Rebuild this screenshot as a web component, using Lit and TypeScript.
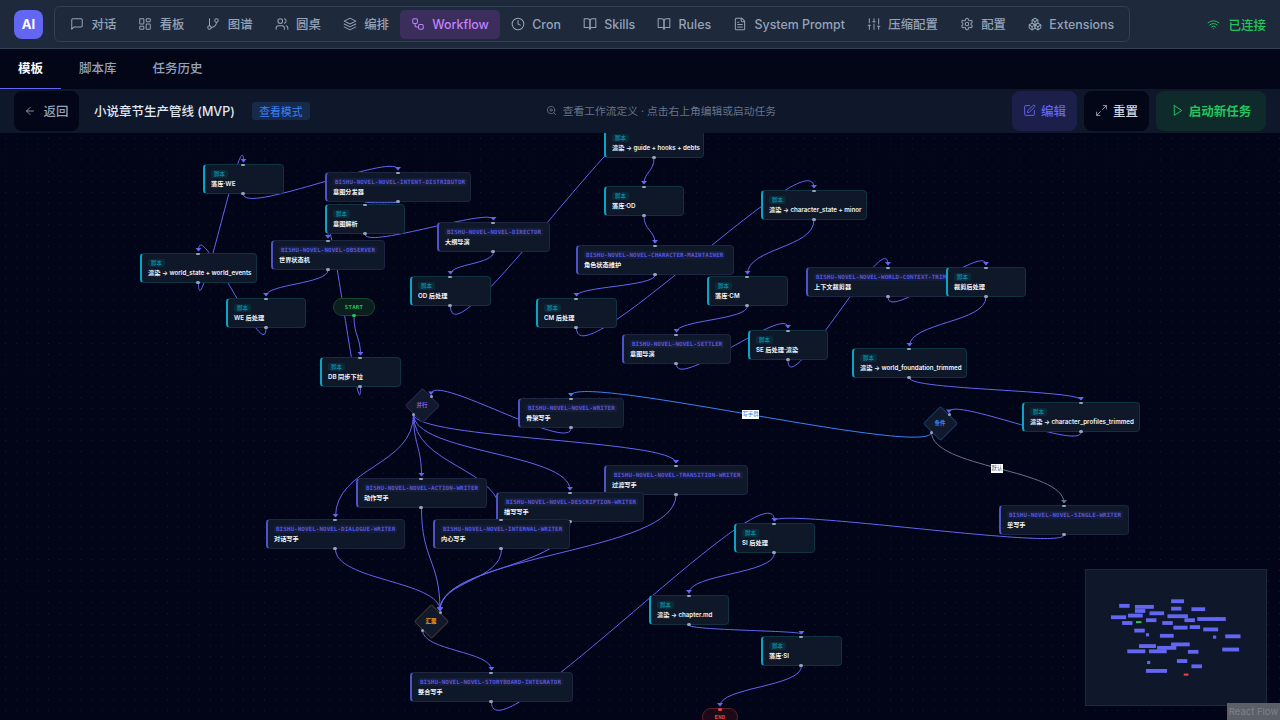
import { LitElement, html, css, svg } from "lit";
import { customElement } from "lit/decorators.js";

const I: Record<string, ReturnType<typeof svg>> = {
  chat: svg`<path d="M21 15a2 2 0 0 1-2 2H7l-4 4V5a2 2 0 0 1 2-2h14a2 2 0 0 1 2 2z"/>`,
  grid: svg`<rect x="3" y="3" width="7" height="9" rx="1"/><rect x="14" y="3" width="7" height="5" rx="1"/><rect x="14" y="12" width="7" height="9" rx="1"/><rect x="3" y="16" width="7" height="5" rx="1"/>`,
  branch: svg`<line x1="6" y1="3" x2="6" y2="15"/><circle cx="18" cy="6" r="3"/><circle cx="6" cy="18" r="3"/><path d="M18 9a9 9 0 0 1-9 9"/>`,
  users: svg`<path d="M16 21v-2a4 4 0 0 0-4-4H6a4 4 0 0 0-4 4v2"/><circle cx="9" cy="7" r="4"/><path d="M22 21v-2a4 4 0 0 0-3-3.87"/><path d="M16 3.13a4 4 0 0 1 0 7.75"/>`,
  layers: svg`<path d="M12 2 2 7l10 5 10-5-10-5Z"/><path d="m2 17 10 5 10-5"/><path d="m2 12 10 5 10-5"/>`,
  workflow: svg`<rect x="3" y="3" width="8" height="8" rx="2"/><path d="M7 11v4a2 2 0 0 0 2 2h4"/><rect x="13" y="13" width="8" height="8" rx="2"/>`,
  clock: svg`<circle cx="12" cy="12" r="10"/><polyline points="12 6 12 12 16 14"/>`,
  book: svg`<path d="M2 3h6a4 4 0 0 1 4 4v14a3 3 0 0 0-3-3H2z"/><path d="M22 3h-6a4 4 0 0 0-4 4v14a3 3 0 0 1 3-3h7z"/>`,
  file: svg`<path d="M15 2H6a2 2 0 0 0-2 2v16a2 2 0 0 0 2 2h12a2 2 0 0 0 2-2V7Z"/><path d="M14 2v4a2 2 0 0 0 2 2h4"/><path d="M10 9H8"/><path d="M16 13H8"/><path d="M16 17H8"/>`,
  sliders: svg`<line x1="4" y1="21" x2="4" y2="14"/><line x1="4" y1="10" x2="4" y2="3"/><line x1="12" y1="21" x2="12" y2="12"/><line x1="12" y1="8" x2="12" y2="3"/><line x1="20" y1="21" x2="20" y2="16"/><line x1="20" y1="12" x2="20" y2="3"/><line x1="2" y1="14" x2="6" y2="14"/><line x1="10" y1="8" x2="14" y2="8"/><line x1="18" y1="16" x2="22" y2="16"/>`,
  gear: svg`<path d="M12.22 2h-.44a2 2 0 0 0-2 2v.18a2 2 0 0 1-1 1.73l-.43.25a2 2 0 0 1-2 0l-.15-.08a2 2 0 0 0-2.73.73l-.22.38a2 2 0 0 0 .73 2.73l.15.1a2 2 0 0 1 1 1.72v.51a2 2 0 0 1-1 1.74l-.15.09a2 2 0 0 0-.73 2.73l.22.38a2 2 0 0 0 2.73.73l.15-.08a2 2 0 0 1 2 0l.43.25a2 2 0 0 1 1 1.73V20a2 2 0 0 0 2 2h.44a2 2 0 0 0 2-2v-.18a2 2 0 0 1 1-1.73l.43-.25a2 2 0 0 1 2 0l.15.08a2 2 0 0 0 2.73-.73l.22-.39a2 2 0 0 0-.73-2.73l-.15-.08a2 2 0 0 1-1-1.74v-.5a2 2 0 0 1 1-1.74l.15-.09a2 2 0 0 0 .73-2.73l-.22-.38a2 2 0 0 0-2.73-.73l-.15.08a2 2 0 0 1-2 0l-.43-.25a2 2 0 0 1-1-1.73V4a2 2 0 0 0-2-2z"/><circle cx="12" cy="12" r="3"/>`,
  boxes: svg`<path d="M2.97 12.92A2 2 0 0 0 2 14.63v3.24a2 2 0 0 0 .97 1.71l3 1.8a2 2 0 0 0 2.06 0L12 19v-5.5l-5-3-4.03 2.42Z"/><path d="m7 16.5-4.74-2.85"/><path d="m7 16.5 5-3"/><path d="M7 16.5v5.17"/><path d="M12 13.5V19l3.97 2.38a2 2 0 0 0 2.06 0l3-1.8a2 2 0 0 0 .97-1.71v-3.24a2 2 0 0 0-.97-1.71L17 10.5l-5 3Z"/><path d="m17 16.5-5-3"/><path d="m17 16.5 4.74-2.85"/><path d="M17 16.5v5.17"/><path d="M7.97 4.42A2 2 0 0 0 7 6.13v4.37l5 3 5-3V6.13a2 2 0 0 0-.97-1.71l-3-1.8a2 2 0 0 0-2.06 0l-3 1.8Z"/><path d="M12 8 7.26 5.15"/><path d="m12 8 4.74-2.85"/><path d="M12 13.5V8"/>`,
  wifi: svg`<path d="M12 20h.01"/><path d="M2 8.82a15 15 0 0 1 20 0"/><path d="M5 12.859a10 10 0 0 1 14 0"/><path d="M8.5 16.429a5 5 0 0 1 7 0"/>`,
  back: svg`<path d="m12 19-7-7 7-7"/><path d="M19 12H5"/>`,
  search: svg`<circle cx="11" cy="11" r="8"/><path d="m21 21-4.3-4.3"/><circle cx="11" cy="11" r="2.5"/>`,
  pen: svg`<path d="M12 3H5a2 2 0 0 0-2 2v14a2 2 0 0 0 2 2h14a2 2 0 0 0 2-2v-7"/><path d="M18.375 2.625a1 1 0 0 1 3 3l-9.013 9.014a2 2 0 0 1-.853.505l-2.873.84a.5.5 0 0 1-.62-.62l.84-2.873a2 2 0 0 1 .506-.852z"/>`,
  expand: svg`<path d="M15 3h6v6"/><path d="m21 3-7 7"/><path d="m3 21 7-7"/><path d="M9 21H3v-6"/>`,
  play: svg`<polygon points="6 3 20 12 6 21 6 3"/>`,
};

const icon = (n: string, size = 14) =>
  html`<svg class="ic" width=${size} height=${size} viewBox="0 0 24 24">${I[n]}</svg>`;

type Kind = "script" | "agent" | "start" | "end" | "par" | "cond" | "join";
interface N { id: string; k: Kind; x: number; y: number; w: number; h?: number; title?: string; label: string; }

const P = "BISHU-NOVEL-NOVEL-";
const S = (id: string, x: number, y: number, w: number, label: string): N => ({ id, k: "script", x, y, w, label, title: "脚本" });
const A = (id: string, x: number, y: number, w: number, t: string, label: string): N => ({ id, k: "agent", x, y, w, label, title: P + t });
const D = (id: string, k: Kind, cx: number, cy: number, label: string): N => ({ id, k, x: cx, y: cy, w: 0, label });

const nodes: N[] = [
  S("we", 203, 164, 81, "落库·WE"),
  A("intent", 325, 172, 146, "INTENT-DISTRIBUTOR", "意图分发器"),
  S("parse", 325, 204, 80, "意图解析"),
  A("obs", 271, 240, 114, "OBSERVER", "世界状态机"),
  S("rworld", 140, 253, 117, "渲染 → world_state + world_events"),
  S("wepost", 226, 298, 80, "WE 后处理"),
  { id: "start", k: "start", x: 333, y: 298, w: 42, h: 18, label: "START" },
  S("db", 320, 357, 81, "DB 同步下拉"),
  A("dir", 437, 222, 113, "DIRECTOR", "大纲导演"),
  S("odpost", 410, 276, 81, "OD 后处理"),
  S("guide", 604, 128, 100, "渲染 → guide + hooks + debts"),
  S("od", 604, 186, 80, "落库·OD"),
  A("char", 576, 245, 158, "CHARACTER-MAINTAINER", "角色状态维护"),
  S("cmpost", 536, 298, 81, "CM 后处理"),
  S("rchar", 761, 190, 106, "渲染 → character_state + minor"),
  S("cm", 707, 276, 81, "落库·CM"),
  A("settler", 622, 334, 109, "SETTLER", "意图导演"),
  S("sepost", 748, 330, 80, "SE 后处理·渲染"),
  A("ctx", 806, 267, 164, "WORLD-CONTEXT-TRIMMER", "上下文裁剪器"),
  S("trimpost", 946, 267, 80, "裁剪后处理"),
  S("rfound", 852, 348, 115, "渲染 → world_foundation_trimmed"),
  S("rprof", 1022, 402, 118, "渲染 → character_profiles_trimmed"),
  D("par", "par", 422, 405, "并行"),
  D("cond", "cond", 940, 423, "条件"),
  A("writer", 518, 398, 106, "WRITER", "骨架写手"),
  A("trans", 604, 465, 144, "TRANSITION-WRITER", "过渡写手"),
  A("action", 356, 478, 131, "ACTION-WRITER", "动作写手"),
  A("desc", 496, 492, 148, "DESCRIPTION-WRITER", "描写写手"),
  A("dial", 266, 519, 139, "DIALOGUE-WRITER", "对话写手"),
  A("inner", 433, 519, 137, "INTERNAL-WRITER", "内心写手"),
  A("single", 999, 505, 130, "SINGLE-WRITER", "单写手"),
  S("sipost", 734, 523, 81, "SI 后处理"),
  S("chapter", 649, 595, 80, "渲染 → chapter.md"),
  S("si", 761, 636, 81, "落库·SI"),
  D("join", "join", 431, 621, "汇聚"),
  A("integ", 410, 672, 163, "STORYBOARD-INTEGRATOR", "整合写手"),
  { id: "end", k: "end", x: 702, y: 708, w: 36, h: 18, label: "END" },
];

const byId = new Map(nodes.map((n) => [n.id, n]));
const isDiamond = (n: N) => n.k === "par" || n.k === "cond" || n.k === "join";
const height = (n: N) => n.h ?? 30;
const outOf = (n: N) => (isDiamond(n) ? [n.x - 8.5, n.y + 9] : [n.x + n.w / 2, n.y + height(n)]);
const into = (n: N) => (isDiamond(n) ? [n.x + 9, n.y - 8.5] : [n.x + n.w / 2, n.y]);

const IND = "#6366f1";
const edges: [string, string, string?][] = [
  ["start", "db"], ["db", "obs"], ["obs", "wepost"], ["wepost", "rworld"], ["rworld", "we"], ["we", "intent"],
  ["intent", "parse"], ["parse", "dir"], ["dir", "odpost"], ["odpost", "guide"], ["guide", "od"], ["od", "char"],
  ["char", "cmpost"], ["cmpost", "rchar"], ["rchar", "cm"], ["cm", "settler"], ["settler", "sepost"], ["sepost", "ctx"],
  ["ctx", "trimpost"], ["trimpost", "rfound"], ["rfound", "rprof"], ["rprof", "cond"],
  ["cond", "writer", "#3b82f6"], ["cond", "single", "#64748b"], ["writer", "par"],
  ["par", "action"], ["par", "dial"], ["par", "desc"], ["par", "trans"], ["par", "inner"],
  ["action", "join"], ["dial", "join"], ["desc", "join"], ["trans", "join"], ["inner", "join"],
  ["join", "integ"], ["integ", "sipost"], ["single", "sipost"], ["sipost", "chapter"], ["chapter", "si"], ["si", "end"],
];

const edgePath = (a: number[], b: number[]) => {
  const d = b[1] - a[1];
  const off = d >= 0 ? 0.5 * d : 6.25 * Math.sqrt(-d * 0.54);
  return `M${a[0]},${a[1]} C${a[0]},${a[1] + off} ${b[0]},${b[1] - off} ${b[0]},${b[1] - 2}`;
};

const NAV: [string, string][] = [
  ["chat", "对话"], ["grid", "看板"], ["branch", "图谱"], ["users", "圆桌"], ["layers", "编排"], ["workflow", "Workflow"],
  ["clock", "Cron"], ["book", "Skills"], ["book", "Rules"], ["file", "System Prompt"], ["sliders", "压缩配置"], ["gear", "配置"], ["boxes", "Extensions"],
];

const miniX = (x: number) => 1110 + 0.1315 * (x - 140);
const miniY = (y: number) => 615 + 0.13 * (y - 253);

@customElement("app-root")
export class AppRoot extends LitElement {
  static styles = css`
    :host { display: block; width: 1280px; height: 720px; overflow: hidden; background: #020617;
      font-family: Inter, "Noto Sans CJK SC", sans-serif; color: #e2e8f0; }
    .page { display: flex; flex-direction: column; height: 720px; }
    .ic { fill: none; stroke: currentColor; stroke-width: 1.75; stroke-linecap: round; stroke-linejoin: round; flex: none; }
    .top { height: 49px; box-sizing: border-box; flex: none; background: #1e293b; border-bottom: 1px solid #334155; display: flex; align-items: center; padding: 0 14px; }
    .logo { width: 29px; height: 29px; border-radius: 8px; background: #6366f1; color: #fff; font-size: 13px; font-weight: 700; display: flex; align-items: center; justify-content: center; flex: none; }
    .nav { margin-left: 11px; width: 1076px; height: 36px; box-sizing: border-box; border: 1px solid #334155; border-radius: 6px; display: flex; align-items: center; padding: 0 2px 0 4.1px; gap: 0; }
    .item { height: 29px; display: flex; align-items: center; gap: 7.5px; padding: 0 10.95px; color: #94a3b8; font-size: 12.4px; font-weight: 500; border-radius: 5px; white-space: nowrap; }
    .item.on { background: #3b2d5c; color: #c084fc; }
    .conn { margin-left: auto; display: flex; align-items: center; gap: 8px; color: #22c55e; font-size: 12.5px; font-weight: 500; }
    .tabs { height: 40px; flex: none; box-sizing: border-box; background: #020617; display: flex; }
    .tab { padding: 0 18px 2px; display: flex; align-items: center; font-size: 12.5px; font-weight: 500; color: #94a3b8; box-sizing: border-box; border-bottom: 1px solid transparent; }
    .tab.on { color: #f8fafc; font-weight: 700; border-bottom-color: #6366f1; }
    .bar { height: 44px; flex: none; box-sizing: border-box; background: #0f172a; display: flex; align-items: center; padding: 0 14px; }
    .btn { height: 40px; border-radius: 8px; display: flex; align-items: center; justify-content: center; gap: 5px; font-size: 12.5px; font-weight: 500; box-sizing: border-box; flex: none; white-space: nowrap; padding-bottom: 1px; }
    .back { width: 65px; gap: 7px; background: #020617; color: #94a3b8; }
    .ttl { margin-left: 15px; font-size: 12.5px; font-weight: 500; color: #e2e8f0; white-space: nowrap; padding-bottom: 2px; }
    .mode { margin-left: 17px; width: 58px; height: 18px; border-radius: 3px; background: #172a4a; color: #3b82f6; font-size: 10.8px; display: flex; align-items: center; justify-content: center; }
    .hint { position: relative; flex: 1; display: flex; align-items: center; justify-content: center; gap: 6px; color: #64748b; font-size: 10.75px; padding: 0 0 1px 0; white-space: nowrap; }
    .acts { display: flex; gap: 7px; }
    .edit { width: 65px; background: #1c1f4a; color: #6366f1; }
    .reset { width: 65px; background: #020617; color: #cbd5e1; }
    .reset .ic { color: #94a3b8; }
    .run { width: 110px; background: #0f2a2a; color: #22c55e; font-weight: 600; }
    .canvas { position: relative; flex: 1; overflow: hidden; background-color: #020417;
      background-image: radial-gradient(circle, #172033 0.6px, transparent 0.8px); background-size: 10.8px 10.8px; }
    .edges { position: absolute; left: 0; top: 0; width: 1280px; height: 587px; }
    .edges path { fill: none; stroke-width: 1; }
    .node { position: absolute; box-sizing: border-box; height: 30px; border-radius: 4px; background: #0f1828; border: 0.5px solid #1e293b; border-left-width: 2px; padding: 5px 6px; display: flex; flex-direction: column; align-items: flex-start; gap: 1px; white-space: nowrap; }
    .node.script { border-color: #0d3440; border-left-color: #0aa5c4; }
    .node.agent { border-color: #1e2540; border-left-color: #4f52c9; }
    .tag { height: 8px; line-height: 8px; font-size: 5.4px; padding: 0 2px; border-radius: 2px; }
    .script .tag { color: #06a5c0; background: #0b2a38; padding: 0 3px; }
    .agent .tag { color: #5558d8; background: #161c3c; font-family: "DejaVu Sans Mono", monospace; font-size: 5.9px; letter-spacing: 0.07px; font-weight: 700; }
    .name { font-size: 6.2px; line-height: 10px; font-weight: 600; color: #f1f5f9; }
    .h { position: absolute; width: 4px; height: 2.5px; border-radius: 1.5px; background: #94a3b8; left: 50%; margin-left: -2px; }
    .script .h, .agent .h { margin-left: -3px; }
    .h.t { top: -1.5px; }
    .h.b { bottom: -1.5px; }
    .pill { position: absolute; box-sizing: border-box; border-radius: 9px; display: flex; align-items: center; justify-content: center; font-family: "DejaVu Sans Mono", monospace; font-size: 5.6px; font-weight: 700; letter-spacing: 0.3px; }
    .pill.start { background: #0b1f1f; border: 0.5px solid #14492f; color: #22c55e; }
    .pill.end { background: #1c0b16; border: 0.5px solid #5f1d2a; color: #ef4444; }
    .pill .h.b { background: #22c55e; width: 3.5px; height: 3.5px; bottom: -2px; }
    .pill .h.t { background: #ef4444; width: 3.5px; height: 3.5px; top: -1.5px; }
    .dia { position: absolute; width: 25px; height: 25px; margin: -12.5px 0 0 -12.5px; transform: rotate(45deg); box-sizing: border-box; background: #111a2c; border: 0.5px solid #2a2550; border-radius: 2px; }
    .dia.cond { border-color: #1e3a5f; }
    .dia.join { border-color: #4a3517; }
    .dlabel { position: absolute; width: 30px; margin: -5px 0 0 -15px; text-align: center; font-size: 5.5px; line-height: 10px; font-weight: 600; }
    .dlabel.par { color: #8b5cf6; }
    .dlabel.cond { color: #3b82f6; }
    .dlabel.join { color: #f59e0b; }
    .dh { position: absolute; width: 3px; height: 3px; margin: -1.5px 0 0 -1.5px; border-radius: 50%; background: #94a3b8; }
    .elabel { position: absolute; height: 9px; line-height: 9px; background: #fff; font-size: 5.4px; text-align: center; }
    .elabel.a { left: 742px; top: 277px; width: 17px; color: #3b82f6; }
    .elabel.b { left: 991px; top: 331px; width: 12px; color: #475569; }
    .mini { position: absolute; left: 1085px; top: 436px; width: 182px; height: 137px; background: #0f172a; border: 1px solid #1e293b; box-sizing: border-box; }
    .rf { position: absolute; right: 0; bottom: 0; width: 53px; height: 17px; line-height: 17px; text-align: center; background: #5b6068; color: #7d828a; font-size: 9.5px; font-family: Inter, sans-serif; }
  `;

  private renderNode(n: N) {
    const pos = `left:${n.x}px;top:${n.y - 133}px`;
    if (isDiamond(n)) {
      const o = outOf(n), t = into(n);
      return html`<div class="dia ${n.k}" style=${pos}></div>
        <div class="dlabel ${n.k}" style=${pos}>${n.label}</div>
        <div class="dh" style="left:${t[0]}px;top:${t[1] - 133}px"></div>
        <div class="dh" style="left:${o[0]}px;top:${o[1] - 133}px"></div>`;
    }
    if (n.k === "start" || n.k === "end") {
      return html`<div class="pill ${n.k}" style="${pos};width:${n.w}px;height:${n.h}px">${n.label}
        <div class="h ${n.k === "start" ? "b" : "t"}"></div></div>`;
    }
    return html`<div class="node ${n.k}" style="${pos};width:${n.w}px">
      <span class="tag">${n.title}</span><span class="name">${n.label}</span>
      <div class="h t"></div><div class="h b"></div></div>`;
  }

  render() {
    return html`<div class="page">
      <header class="top">
        <div class="logo">AI</div>
        <nav class="nav">
          ${NAV.map(([ic, t]) => html`<div class="item ${t === "Workflow" ? "on" : ""}">${icon(ic)}<span>${t}</span></div>`)}
        </nav>
        <div class="conn">${icon("wifi", 13)}<span>已连接</span></div>
      </header>
      <div class="tabs">
        <div class="tab on">模板</div><div class="tab">脚本库</div><div class="tab">任务历史</div>
      </div>
      <div class="bar">
        <div class="btn back">${icon("back", 12)}<span>返回</span></div>
        <div class="ttl">小说章节生产管线 (MVP)</div>
        <div class="mode">查看模式</div>
        <div class="hint">${icon("search", 11)}<span>查看工作流定义 · 点击右上角编辑或启动任务</span></div>
        <div class="acts">
          <div class="btn edit">${icon("pen", 13)}<span>编辑</span></div>
          <div class="btn reset">${icon("expand", 13)}<span>重置</span></div>
          <div class="btn run">${icon("play", 13)}<span>启动新任务</span></div>
        </div>
      </div>
      <main class="canvas">
        <svg class="edges" viewBox="0 133 1280 587">
          ${edges.map(([a, b, c]) => {
            const s = outOf(byId.get(a)!), t = into(byId.get(b)!);
            const col = c ?? IND;
            return svg`<path d=${edgePath(s, t)} stroke=${col}></path>
              <polygon points="${t[0] - 3},${t[1] - 5} ${t[0] + 3},${t[1] - 5} ${t[0]},${t[1] - 1.5}" fill=${col}></polygon>`;
          })}
        </svg>
        ${nodes.map((n) => this.renderNode(n))}
        <div class="elabel a">写手群</div>
        <div class="elabel b">默认</div>
        <svg class="mini" viewBox="1085 569 182 137">
          ${nodes.map((n) => {
            const dia = isDiamond(n);
            const x = dia ? miniX(n.x) - 1.6 : miniX(n.x);
            const y = dia ? miniY(n.y) - 1.6 : miniY(n.y);
            const w = dia ? 3.2 : n.w * 0.1315;
            const h = dia ? 3.2 : n.k === "start" || n.k === "end" ? 2 : 3.9;
            const f = n.k === "start" ? "#22c55e" : n.k === "end" ? "#ef4444" : IND;
            return svg`<rect x=${x} y=${y} width=${w} height=${h} fill=${f}></rect>`;
          })}
        </svg>
        <div class="rf">React Flow</div>
      </main>
    </div>`;
  }
}
